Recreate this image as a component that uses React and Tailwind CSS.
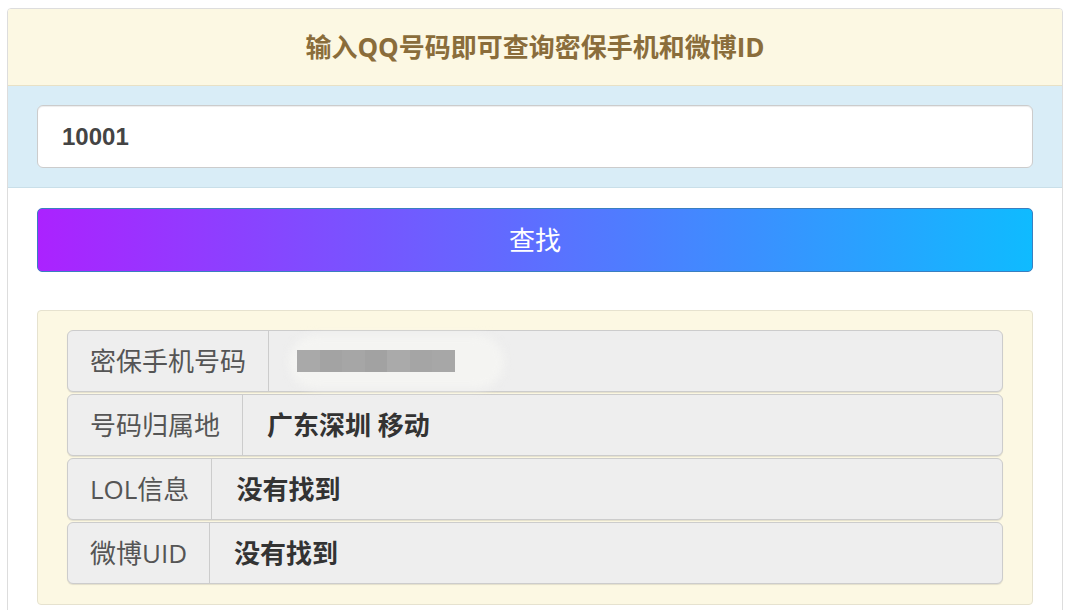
import { useState } from "react";

const rows = [
  { label: "密保手机号码", value: null },
  { label: "号码归属地", value: "广东深圳 移动" },
  { label: "LOL信息", value: "没有找到" },
  { label: "微博UID", value: "没有找到" },
];

const font = { fontFamily: '"Open Sans", "Noto Sans CJK SC", sans-serif' };

const App = () => {
  const [qq, setQq] = useState("10001");

  return (
    <div className="min-h-[610px] bg-white pl-[7px] pr-[5px] pt-[8px]" style={font}>
      <div className="border border-[#dddddd] rounded-[4px] overflow-hidden min-h-[610px]">
        {/* heading */}
        <div className="h-[77px] bg-[#fcf8e3] border-b border-[#e8e1c6] flex items-center justify-center">
          <h1 className="text-[26px] font-bold text-[#8a6d3b]">
            输入QQ号码即可查询密保手机和微博ID
          </h1>
        </div>

        {/* input band */}
        <div className="bg-[#d9edf7] border-b border-[#c9dfe9] px-[29px] py-[19px]">
          <input
            type="text"
            value={qq}
            onChange={(e) => setQq(e.target.value)}
            className="w-full h-[63px] bg-white border border-[#cccccc] rounded-[6px] px-[24px] text-[24px] font-bold text-[#444] shadow-[inset_0_1px_1px_rgba(0,0,0,0.075)] outline-none"
            style={{ fontFamily: '"Liberation Sans", Arial, sans-serif' }}
          />
        </div>

        <div className="px-[29px] pt-[20px]">
          <button className="w-full h-[64px] rounded-[5px] border border-[#3a7fc0] bg-linear-to-r/srgb from-[#ab22ff] to-[#0fbbff] text-white text-[26px]">
            查找
          </button>

          {/* result well */}
          <div className="mt-[38px] bg-[#fcf8e3] border border-[#e6e2cf] rounded-[4px] px-[29px] pt-[19px] pb-[20px] flex flex-col gap-[2px]">
            {rows.map((row) => (
              <div
                key={row.label}
                className="h-[62px] flex bg-[#eeeeee] border border-[#cccccc] rounded-[6px] shadow-[0_1px_1px_rgba(0,0,0,0.1)]"
              >
                <div className="flex items-center px-[22px] border-r border-[#cccccc] text-[26px] text-[#555555] whitespace-nowrap">
                  {row.label}
                </div>
                <div className="flex-1 flex items-center px-[24px] text-[26px] font-bold text-[#333333]">
                  {row.value ? (
                    row.value
                  ) : (
                    <div className="relative h-full w-[220px] flex items-center">
                      <div className="absolute left-[-4px] top-[4px] w-[215px] h-[54px] rounded-full bg-[#f4f4f2] blur-[4px]" />
                      <div className="relative ml-[4px] h-[22px] w-[158px] flex">
                        <div className="flex-1 bg-[#a9a9a9]" />
                        <div className="flex-1 bg-[#a3a3a3]" />
                        <div className="flex-1 bg-[#a6a6a6]" />
                        <div className="flex-1 bg-[#a2a2a2]" />
                        <div className="flex-1 bg-[#aaaaaa]" />
                        <div className="flex-1 bg-[#a5a5a5]" />
                        <div className="flex-1 bg-[#a7a7a7]" />
                      </div>
                    </div>
                  )}
                </div>
              </div>
            ))}
          </div>
        </div>
      </div>
    </div>
  );
};

export default App;
